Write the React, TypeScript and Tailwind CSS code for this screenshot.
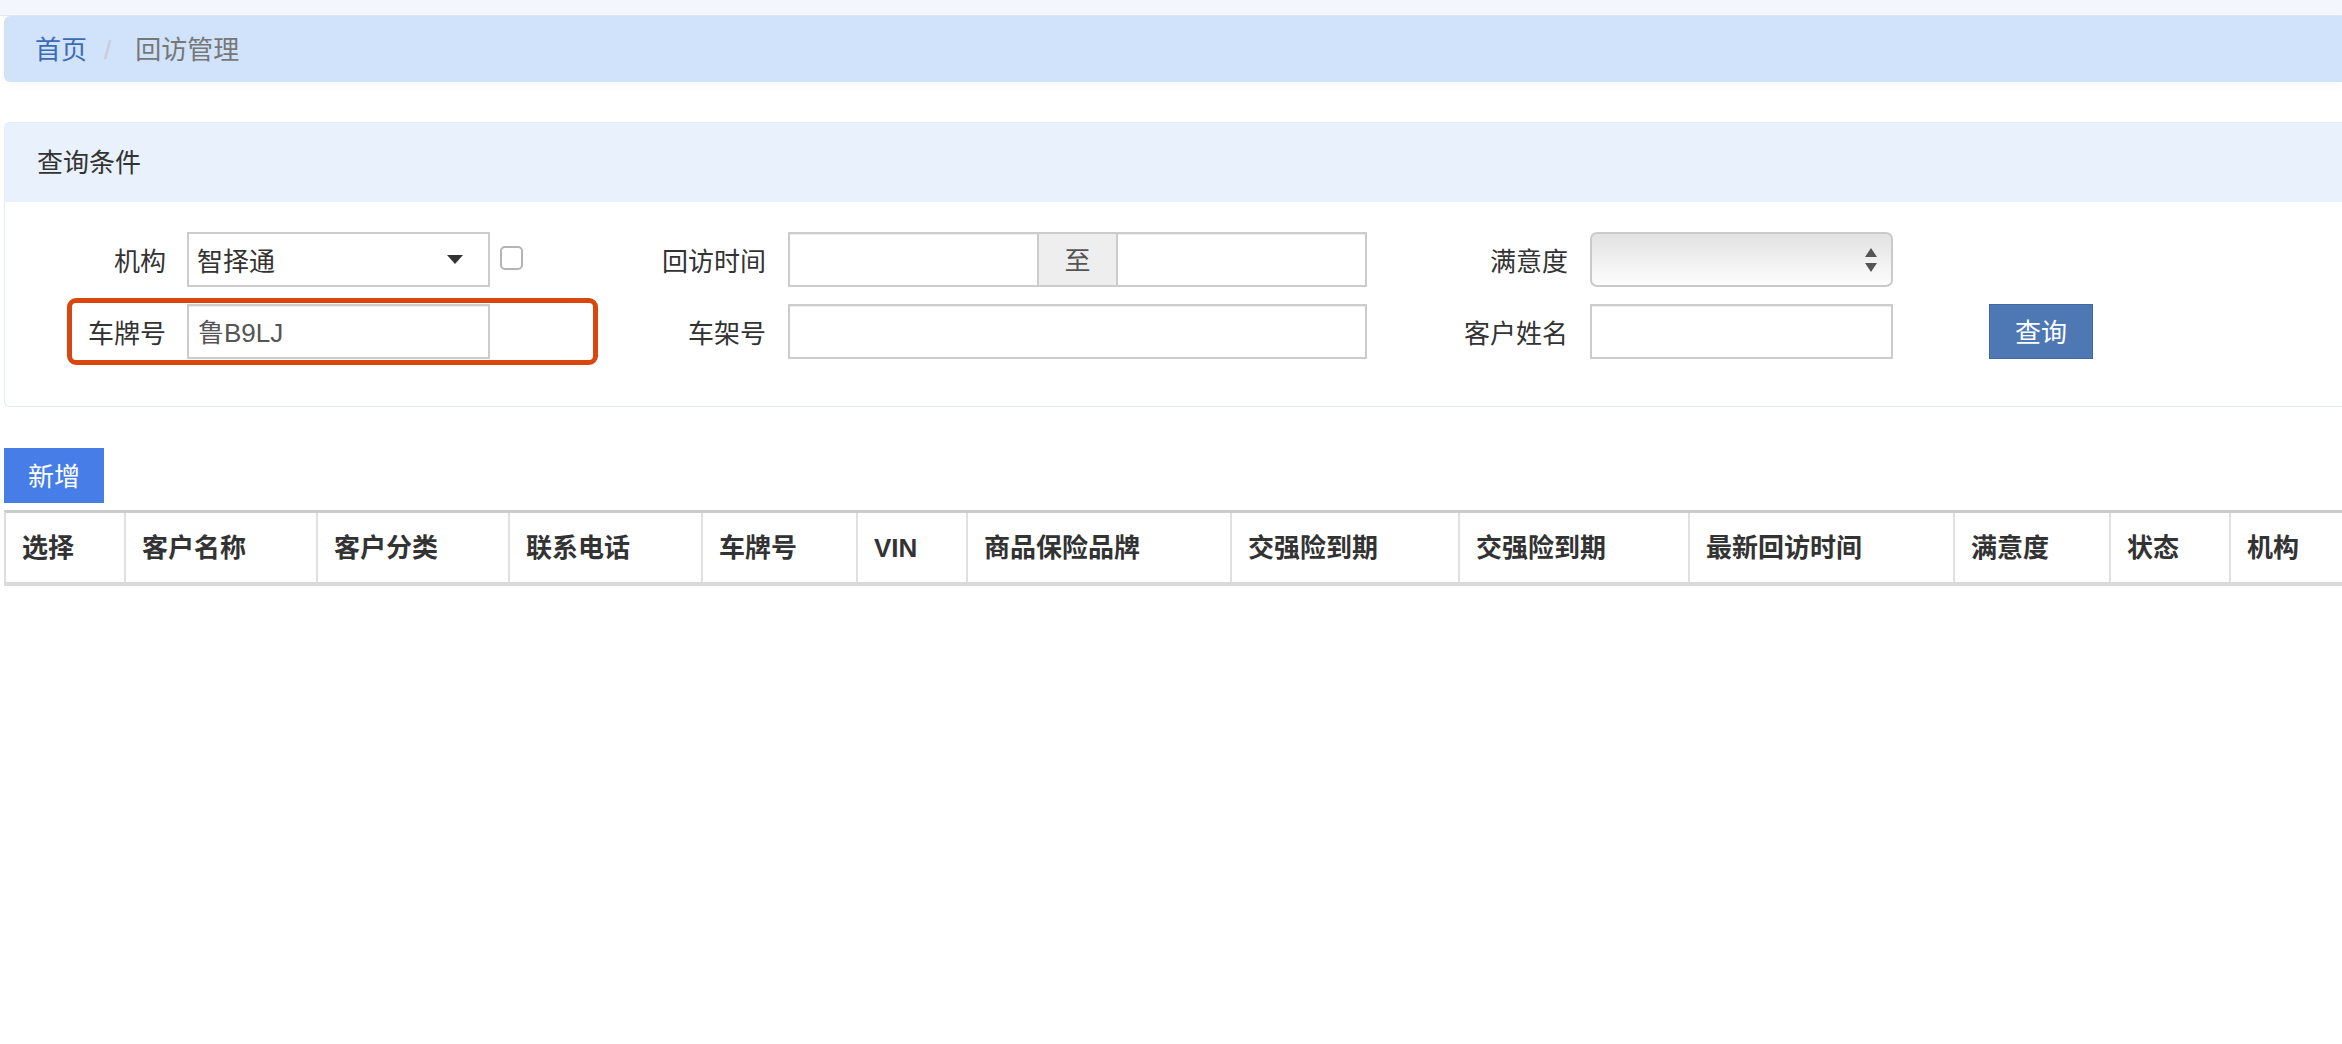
export default function App() {
  const headers = [
    "选择",
    "客户名称",
    "客户分类",
    "联系电话",
    "车牌号",
    "VIN",
    "商品保险品牌",
    "交强险到期",
    "交强险到期",
    "最新回访时间",
    "满意度",
    "状态",
    "机构",
  ];

  return (
    <div className="w-full min-h-screen overflow-hidden bg-white font-['Liberation_Sans','Noto_Sans_CJK_SC',sans-serif] text-[26px] text-[#333]">
      {/* top strip */}
      <div className="h-[16px] bg-[#f3f7fd] border-b border-[#e3e8ef]" />

      {/* breadcrumb */}
      <div className="ml-1 h-[66px] rounded-l-md bg-[#d1e2fb] pl-[31px] pt-[2px] flex items-center shadow-[0_4px_8px_rgba(0,0,0,0.03)]">
        <span className="text-[#3b6cb3]">首页</span>
        <span className="ml-[17px] text-[#c6ccd4]">/</span>
        <span className="ml-[24px] text-[#777]">回访管理</span>
      </div>

      {/* search panel */}
      <div className="mt-[40px] ml-1 rounded-l-md border border-r-0 border-[#e2ebf6]">
        <div className="h-[79px] bg-[#e9f1fc] pl-[32px] pt-[2px] flex items-center">查询条件</div>
        <div className="pt-[30px] pb-[47px] pl-[41px]">
          <div className="relative grid grid-cols-[120px_324px_276px_601px_201px_325px_200px] gap-y-[17px]">
            {/* row 1 */}
            <div className="h-[55px] pt-[6px] flex items-center justify-end">机构</div>
            <div className="pl-[21px]">
              <div className="h-[55px] w-[303px] border-2 border-[#ccc] bg-white pl-[8px] pr-[25px] flex items-center justify-between">
                <span className="pt-[5px]">智择通</span>
                <svg width="16" height="9" viewBox="0 0 16 9">
                  <path d="M0 0h16L8 9z" fill="#333" />
                </svg>
              </div>
            </div>
            <div className="flex justify-between">
              <div className="ml-[10px] mt-[14px] h-[24px] w-[23px] rounded-[5px] border-2 border-[#b4b4b4] bg-white" />
              <div className="h-[55px] pt-[6px] flex items-center">回访时间</div>
            </div>
            <div className="pl-[22px]">
              <div className="flex h-[55px] w-[579px]">
                <div className="w-[251px] border-2 border-[#ccc] bg-white shadow-[inset_0_1px_1px_rgba(0,0,0,0.075)]" />
                <div className="w-[77px] border-y-2 border-[#ccc] bg-[#eeeeef] pt-[4px] text-[#555] flex items-center justify-center">至</div>
                <div className="w-[251px] border-2 border-[#ccc] bg-white shadow-[inset_0_1px_1px_rgba(0,0,0,0.075)]" />
              </div>
            </div>
            <div className="h-[55px] pt-[6px] flex items-center justify-end">满意度</div>
            <div className="pl-[22px]">
              <div className="h-[55px] w-[303px] rounded-[7px] border-2 border-[#cacaca] bg-gradient-to-b from-[#e2e2e2] to-[#fdfdfd] pr-[14px] flex items-center justify-end">
                <svg width="12" height="24" viewBox="0 0 12 24">
                  <path d="M6 0l6 9H0z" fill="#555" />
                  <path d="M0 15h12l-6 9z" fill="#555" />
                </svg>
              </div>
            </div>
            <div />

            {/* row 2 */}
            <div className="h-[55px] pt-[6px] flex items-center justify-end">车牌号</div>
            <div className="pl-[21px]">
              <div className="h-[55px] w-[303px] border-2 border-[#ccc] bg-white pl-[9px] pt-[3px] text-[#555] flex items-center shadow-[inset_0_1px_1px_rgba(0,0,0,0.075)]">
                鲁B9LJ
              </div>
            </div>
            <div className="h-[55px] pt-[6px] flex items-center justify-end">车架号</div>
            <div className="pl-[22px]">
              <div className="h-[55px] w-[579px] border-2 border-[#ccc] bg-white shadow-[inset_0_1px_1px_rgba(0,0,0,0.075)]" />
            </div>
            <div className="h-[55px] pt-[6px] flex items-center justify-end">客户姓名</div>
            <div className="pl-[22px]">
              <div className="h-[55px] w-[303px] border-2 border-[#ccc] bg-white shadow-[inset_0_1px_1px_rgba(0,0,0,0.075)]" />
            </div>
            <div className="flex justify-end">
              <button className="h-[55px] w-[104px] border border-[#3f69a6] bg-[#4e78b4] pt-[3px] text-white">查询</button>
            </div>

            {/* highlight annotation */}
            <div className="absolute left-[21px] top-[66px] h-[67px] w-[531px] rounded-[9px] border-[5px] border-[#d9470f]" />
          </div>
        </div>
      </div>

      {/* actions */}
      <button className="mt-[41px] ml-1 h-[55px] w-[100px] bg-[#467de6] pt-[3px] text-white">新增</button>

      {/* table */}
      <div className="mt-[7px] ml-1 w-[2400px] border-l-2 border-t-[3px] border-b-4 border-l-[#ddd] border-t-[#cbcbcb] border-b-[#dadada] grid grid-cols-[120px_192px_192px_193px_155px_110px_264px_228px_230px_265px_156px_120px_169px]">
        {headers.map((h, i) => (
          <div key={i} className="h-[69px] pl-4 pt-[2px] border-r-2 border-[#e0e0e0] flex items-center font-bold">
            {h}
          </div>
        ))}
      </div>
    </div>
  );
}
